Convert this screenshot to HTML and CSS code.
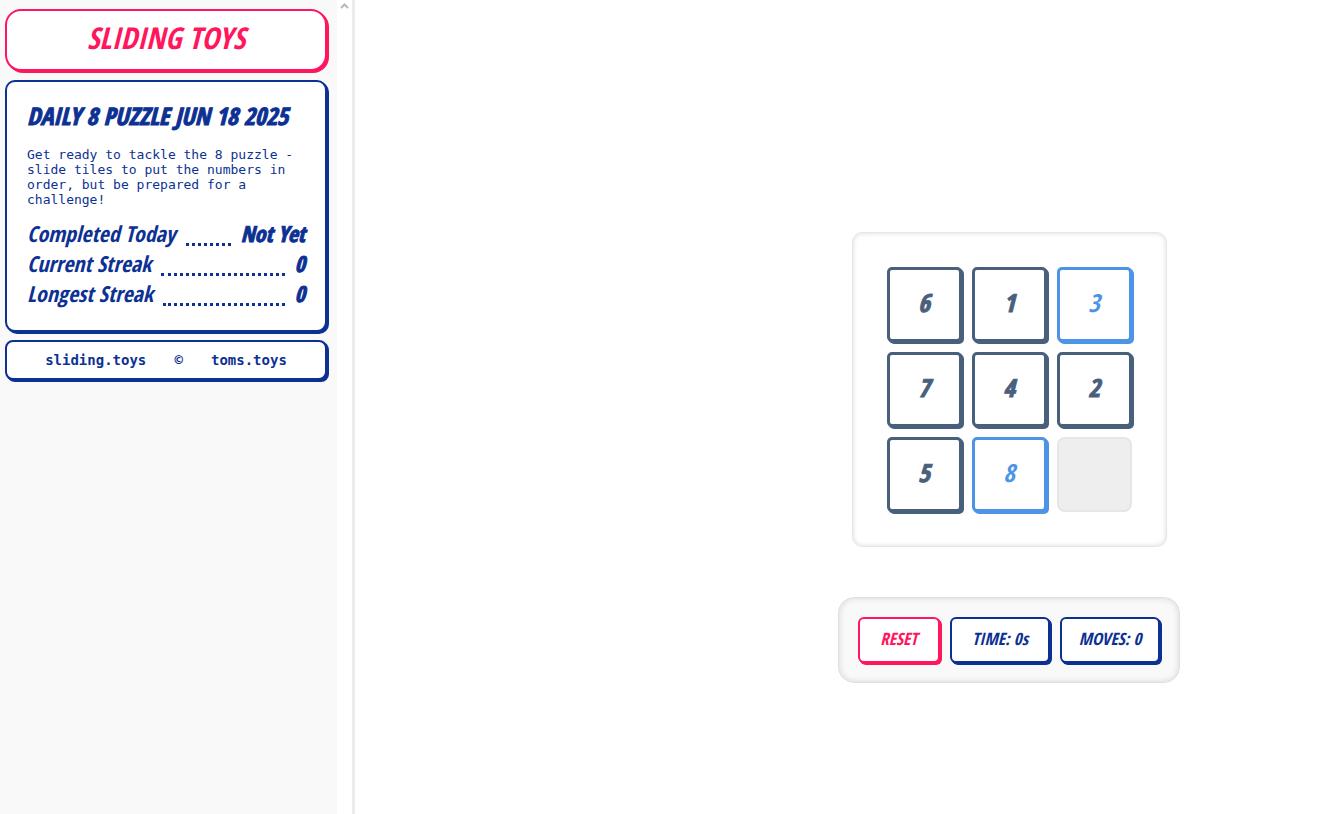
FILE: index.html
```html
<!DOCTYPE html>
<html lang="en">
<head>
    <meta charset="UTF-8">
    <meta name="viewport" content="width=device-width, initial-scale=1.0">
    <title>Sliding Toys</title>
    <link rel="stylesheet" href="styles.css">
</head>
<body>
    <div class="page">
        <aside class="sidebar">
            <div class="panel">
                <header class="card title-card">
                    <h1>SLIDING TOYS</h1>
                </header>

                <section class="card info-card">
                    <h2>DAILY 8 PUZZLE JUN 18 2025</h2>
                    <p>Get ready to tackle the 8 puzzle - slide tiles to put the numbers in order, but be prepared for a challenge!</p>
                    <dl class="stats">
                        <div class="stat">
                            <dt>Completed Today</dt>
                            <dd>Not Yet</dd>
                        </div>
                        <div class="stat">
                            <dt>Current Streak</dt>
                            <dd>0</dd>
                        </div>
                        <div class="stat">
                            <dt>Longest Streak</dt>
                            <dd>0</dd>
                        </div>
                    </dl>
                </section>

                <footer class="card footer-card">
                    <a href="#">sliding.toys</a>
                    <span>©</span>
                    <a href="#">toms.toys</a>
                </footer>
            </div>

            <div class="scroll-track">
                <svg width="9" height="7" viewBox="0 0 9 7" aria-hidden="true">
                    <path d="M1 6 L4.5 2.5 L8 6" fill="none" stroke="#b8b8b8" stroke-width="2"/>
                </svg>
            </div>
        </aside>

        <main class="game">
            <div class="board">
                <button class="tile">6</button>
                <button class="tile">1</button>
                <button class="tile placed">3</button>
                <button class="tile">7</button>
                <button class="tile">4</button>
                <button class="tile">2</button>
                <button class="tile">5</button>
                <button class="tile placed">8</button>
                <div class="empty"></div>
            </div>

            <div class="controls">
                <button class="control reset">RESET</button>
                <div class="control">TIME: 0s</div>
                <div class="control">MOVES: 0</div>
            </div>
        </main>
    </div>
</body>
</html>
```
FILE: styles.css
```css
* {
    margin: 0;
    padding: 0;
    box-sizing: border-box;
}

:root {
    --blue: #0d3193;
    --pink: #ff165d;
    --slate: #48607c;
    --sky: #4e94e6;
    --display: "Liberation Sans Narrow", "Open Sans Condensed", "Liberation Sans", sans-serif;
}

body {
    font-family: var(--display);
    background: #fff;
    color: var(--blue);
}

.page {
    display: flex;
    min-height: 100vh;
}

/* Sidebar */
.sidebar {
    display: flex;
    flex: none;
    width: 355px;
    border-right: 3px solid #ececec;
}

.panel {
    flex: 1;
    padding: 9px 10px 9px 5px;
    background: #f9f9f9;
}

.scroll-track {
    width: 15px;
    padding-top: 2px;
    text-align: center;
    line-height: 0;
}

.card {
    background: #fff;
    border: 2px solid var(--blue);
    border-radius: 10px;
    box-shadow: 1px 1px 0 var(--blue), 2px 2px 0 var(--blue);
}

.title-card {
    margin-bottom: 9px;
    padding: 7px 0 11px;
    color: var(--pink);
    border-color: var(--pink);
    border-radius: 16px;
    box-shadow: 1px 1px 0 var(--pink), 2px 2px 0 var(--pink);
    text-align: center;
}

h1 {
    font-size: 30px;
    line-height: 40px;
    font-style: italic;
    font-weight: bold;
}

.info-card {
    margin-bottom: 8px;
    padding: 19px 20px 22px;
}

h2 {
    margin-bottom: 16px;
    font-size: 24px;
    line-height: 30px;
    font-style: italic;
    font-weight: bold;
    white-space: nowrap;
    -webkit-text-stroke: 1px;
}

.info-card p {
    margin-bottom: 11px;
    font-family: "DejaVu Sans Mono", monospace;
    font-size: 13px;
    line-height: 15px;
}

.stat {
    display: flex;
    font-size: 22px;
    line-height: 30px;
    font-style: italic;
    font-weight: bold;
}

/* Dotted leader between the label and its value */
.stat dt {
    display: flex;
    flex: 1;
}

.stat dt::after {
    content: "";
    flex: 1;
    height: 25px;
    margin: 0 10px;
    border-bottom: 3px dotted var(--blue);
}

.stat dd {
    -webkit-text-stroke: 1px;
}

.footer-card {
    display: flex;
    justify-content: space-evenly;
    padding: 8px 10px;
    border-radius: 8px;
    font-family: "DejaVu Sans Mono", monospace;
    font-size: 14px;
    font-weight: bold;
    line-height: 20px;
}

.footer-card a {
    color: inherit;
    text-decoration: none;
}

/* Game */
.game {
    flex: 1;
    display: flex;
    flex-direction: column;
    align-items: center;
    justify-content: center;
    gap: 50px;
    padding: 101px 0 0 340px;
}

.board {
    display: grid;
    grid-template-columns: repeat(3, 75px);
    grid-auto-rows: 75px;
    gap: 10px;
    padding: 34px;
    border: 1px solid #e6e6e6;
    border-radius: 10px;
    box-shadow: inset 0 0 5px rgba(0, 0, 0, 0.15);
}

.tile {
    padding-bottom: 6px;
    background: #fff;
    color: var(--slate);
    border: 3px solid;
    border-radius: 5px;
    box-shadow: 1px 1px 0, 2px 2px 0;
    font-family: inherit;
    font-size: 25px;
    font-style: italic;
    font-weight: bold;
    -webkit-text-stroke: 1px;
    cursor: pointer;
}

.tile.placed {
    color: var(--sky);
    -webkit-text-stroke: 0;
}

.empty {
    background: #eee;
    border: 2px solid #e6e6e6;
    border-radius: 8px;
}

.controls {
    display: flex;
    gap: 10px;
    padding: 19px;
    background: #f9f9f9;
    border: 1px solid #e0e0e0;
    border-radius: 16px;
    box-shadow: inset 0 0 6px rgba(0, 0, 0, 0.15);
}

.control {
    min-width: 100px;
    padding: 5px 0 7px;
    background: #fff;
    color: var(--blue);
    border: 2px solid;
    border-radius: 6px;
    box-shadow: 1px 1px 0, 2px 2px 0;
    font-family: inherit;
    font-size: 17px;
    line-height: 30px;
    font-style: italic;
    font-weight: bold;
    text-align: center;
}

.control.reset {
    min-width: 82px;
    color: var(--pink);
    cursor: pointer;
}
```
